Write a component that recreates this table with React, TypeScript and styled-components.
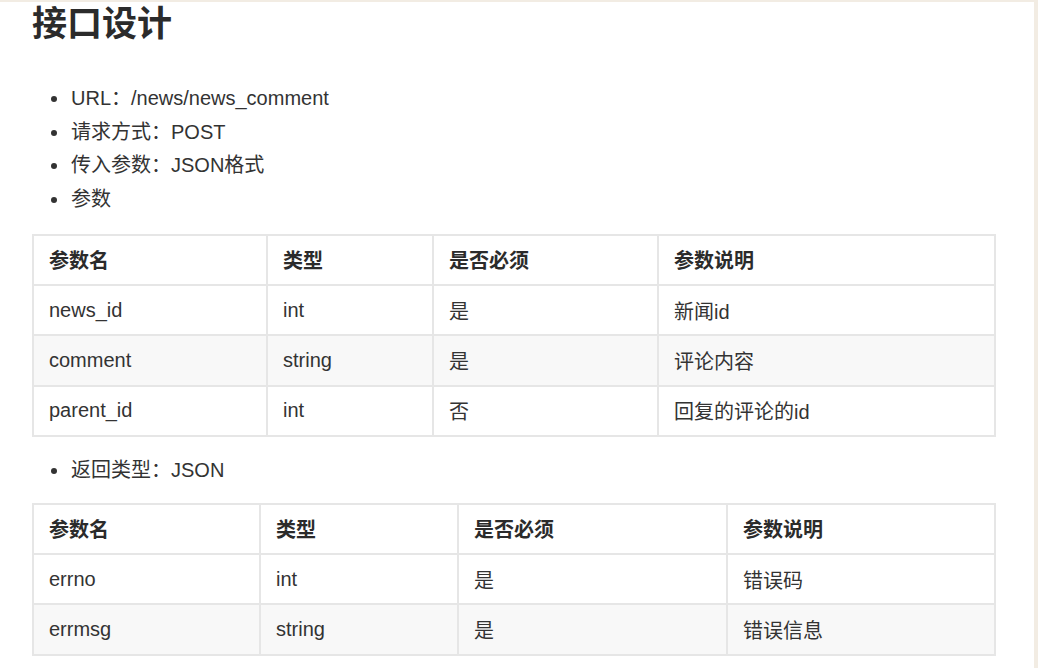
import React from "react";
import styled, { createGlobalStyle } from "styled-components";

const GlobalStyle = createGlobalStyle`
  html, body {
    margin: 0;
    padding: 0;
    background: #f2ece3;
    height: 668px;
    overflow: hidden;
  }
  body {
    font-family: "Liberation Sans", Arial, "Noto Sans CJK SC", sans-serif;
    color: #333;
  }
`;

const Page = styled.div`
  width: 1034px;
  height: 666px;
  margin-top: 2px;
  background: #fff;
  box-sizing: border-box;
  padding: 0 38px 0 32px;
  overflow: hidden;
`;

const Heading = styled.h1`
  margin: 0;
  font-size: 35px;
  line-height: 44px;
  font-weight: 700;
  color: #2b2b2b;
`;

const List = styled.ul<{ top: number }>`
  margin: ${(p) => p.top}px 0 0;
  padding: 0 0 0 19px;
  list-style: none;
  font-size: 20px;
  line-height: 33.7px;
  color: #333;
`;

const Item = styled.li`
  display: flex;
  align-items: center;
  gap: 14px;
`;

const Bullet = styled.span`
  width: 6px;
  height: 6px;
  border-radius: 50%;
  background: #333;
  flex-shrink: 0;
`;

const Table = styled.table<{ top: number }>`
  width: 962px;
  margin-top: ${(p) => p.top}px;
  border-collapse: collapse;
  table-layout: fixed;
  font-size: 20px;
  color: #333;
`;

const Row = styled.tr<{ striped?: boolean }>`
  height: 50.3px;
  background: ${(p) => (p.striped ? "#f8f8f8" : "#fff")};
`;

const HeadCell = styled.th`
  border: 2px solid #e6e6e6;
  padding: 0 15px;
  text-align: left;
  font-weight: 700;
  color: #2b2b2b;
`;

const Cell = styled.td`
  border: 2px solid #e6e6e6;
  padding: 0 15px;
  text-align: left;
`;

type Param = [string, string, string, string];

const headers: Param = ["参数名", "类型", "是否必须", "参数说明"];

const requestParams: Param[] = [
  ["news_id", "int", "是", "新闻id"],
  ["comment", "string", "是", "评论内容"],
  ["parent_id", "int", "否", "回复的评论的id"],
];

const responseParams: Param[] = [
  ["errno", "int", "是", "错误码"],
  ["errmsg", "string", "是", "错误信息"],
];

function ParamTable({
  rows,
  widths,
  top,
}: {
  rows: Param[];
  widths: number[];
  top: number;
}) {
  return (
    <Table top={top}>
      <colgroup>
        {widths.map((w, i) => (
          <col key={i} style={{ width: w }} />
        ))}
      </colgroup>
      <thead>
        <Row>
          {headers.map((h) => (
            <HeadCell key={h}>{h}</HeadCell>
          ))}
        </Row>
      </thead>
      <tbody>
        {rows.map((r, i) => (
          <Row key={r[0]} striped={i % 2 === 1}>
            {r.map((c, j) => (
              <Cell key={j}>{c}</Cell>
            ))}
          </Row>
        ))}
      </tbody>
    </Table>
  );
}

function BulletList({ items, top }: { items: string[]; top: number }) {
  return (
    <List top={top}>
      {items.map((t) => (
        <Item key={t}>
          <Bullet />
          {t}
        </Item>
      ))}
    </List>
  );
}

export default function App() {
  return (
    <>
      <GlobalStyle />
      <Page>
        <Heading>接口设计</Heading>
        <BulletList
          top={36}
          items={["URL：/news/news_comment", "请求方式：POST", "传入参数：JSON格式", "参数"]}
        />
        <ParamTable rows={requestParams} widths={[234, 166, 225, 337]} top={17} />
        <BulletList top={17} items={["返回类型：JSON"]} />
        <ParamTable rows={responseParams} widths={[227, 198, 269, 268]} top={15} />
      </Page>
    </>
  );
}
